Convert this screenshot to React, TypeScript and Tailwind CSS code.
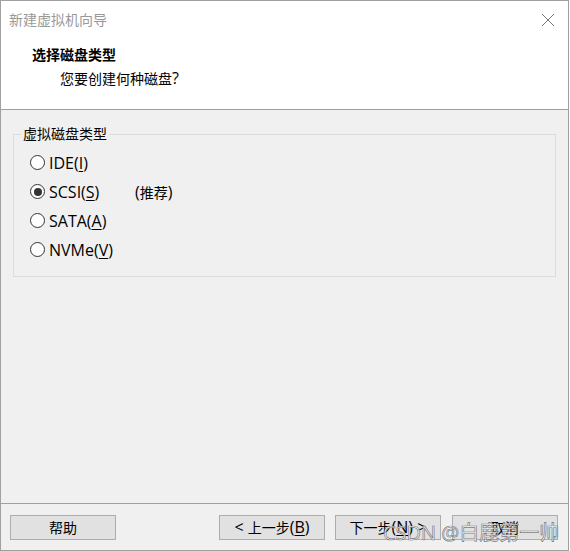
import React from "react";

const FONT = {
  fontFamily: '"Open Sans", "Noto Sans CJK SC", sans-serif',
};

function Radio({ checked }: { checked?: boolean }) {
  return (
    <span className="w-[15px] h-[15px] rounded-full border border-[#333] bg-white flex items-center justify-center shrink-0">
      {checked && <span className="w-[8px] h-[8px] rounded-full bg-[#333]" />}
    </span>
  );
}

function Option({
  pre,
  key_,
  checked,
  extra,
}: {
  pre: string;
  key_: string;
  checked?: boolean;
  extra?: boolean;
}) {
  return (
    <div className="h-[29px] flex items-center gap-[4px] pl-[1px]">
      <Radio checked={checked} />
      <span className="w-[82px] text-[16px] leading-[20px]">
        {pre}(<span className="underline underline-offset-2">{key_}</span>)
      </span>
      {extra && (
        <span>
          <span className="text-[16px]">(</span>推荐<span className="text-[16px]">)</span>
        </span>
      )}
    </div>
  );
}

function Btn({ children }: { children: React.ReactNode }) {
  return (
    <button className="w-[106px] h-[25px] bg-[#e1e1e1] border border-[#adadad] text-[14px] text-black flex items-center justify-center">
      {children}
    </button>
  );
}

export default function App() {
  return (
    <div className="w-[570px] h-[551px] bg-white relative text-[14px] text-black" style={FONT}>
      <div className="w-[569px] h-[551px] border border-[#a0a0a0] flex flex-col">
        <div className="h-[109px] bg-white border-b border-[#a0a0a0] shrink-0">
          <div className="h-[37px] pl-[8px] pr-[13px] flex items-center justify-between">
            <span className="text-[#999]">新建虚拟机向导</span>
            <svg width="14" height="14" viewBox="0 0 14 14">
              <path d="M1 1 L13 13 M13 1 L1 13" stroke="#777" strokeWidth="1" />
            </svg>
          </div>
          <div className="pl-[31px] pt-[7px] font-bold leading-[20px]">选择磁盘类型</div>
          <div className="pl-[59px] pt-[3px] leading-[20px]">
            您要创建何种磁盘<span className="text-[16px]">?</span>
          </div>
        </div>
        <div className="flex-1 bg-[#f0f0f0] flex flex-col">
          <fieldset className="mt-[14px] mx-[12px] border border-[#dcdcdc] px-[15px] pb-[12px]">
            <legend className="px-[2px] ml-[-8px] leading-[20px]">虚拟磁盘类型</legend>
            <div className="pt-[4px]">
              <Option pre="IDE" key_="I" />
              <Option pre="SCSI" key_="S" checked extra />
              <Option pre="SATA" key_="A" />
              <Option pre="NVMe" key_="V" />
            </div>
          </fieldset>
          <div className="flex-1" />
          <div className="h-[47px] border-t border-[#a0a0a0] flex items-center pl-[9px] pr-[10px]">
            <Btn>帮助</Btn>
            <div className="flex-1" />
            <Btn>
              <span className="text-[16px]">&lt;&nbsp;</span>上一步
              <span className="text-[16px]">
                (<span className="underline underline-offset-2">B</span>)
              </span>
            </Btn>
            <div className="w-[10px]" />
            <Btn>
              下一步
              <span className="text-[16px]">
                (<span className="underline underline-offset-2">N</span>) &gt;
              </span>
            </Btn>
            <div className="w-[11px]" />
            <Btn>取消</Btn>
          </div>
        </div>
      </div>
      <div
        className="absolute left-[383px] top-[521px] text-[20px] leading-[24px] text-white/80 pointer-events-none"
        style={{ WebkitTextStroke: "0.7px rgba(80,80,80,0.75)" }}
      >
        CSDN @白鹿第一帅
      </div>
    </div>
  );
}
